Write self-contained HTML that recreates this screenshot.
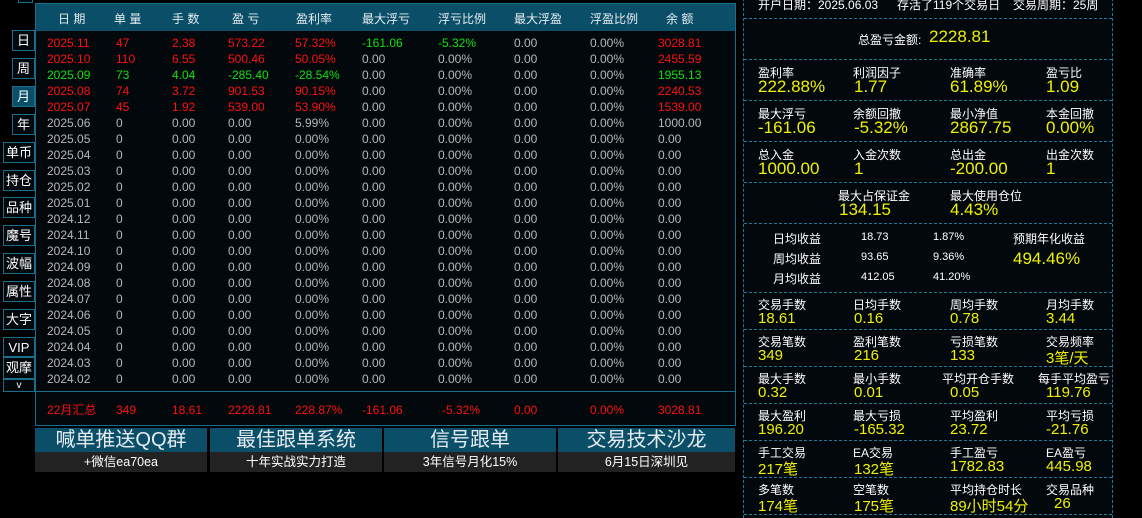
<!DOCTYPE html><html><head><meta charset="utf-8"><style>
*{margin:0;padding:0;box-sizing:border-box}
body{width:1142px;height:517px;background:#000;position:relative;overflow:hidden;font-family:"Liberation Sans","Noto Sans CJK SC",sans-serif;color:#fff}
.btn{position:absolute;border:1px solid #1a6e8c;background:#02080c;color:#fff;font-size:13px;text-align:center;line-height:19px}
#tbl{position:absolute;left:35px;top:3px;width:701px;height:423px;border:1px solid #1a6e8c;background:#02080c}
#hd{position:absolute;left:0;top:0;width:699px;height:27px;background:#0b4e68}
.h{position:absolute;top:6px;font-size:12px;color:#e6eef2;white-space:nowrap}
.r{position:absolute;left:0;height:16px;font-size:12px;line-height:16px;color:#b8b8b8;width:699px}
.r span{position:absolute;top:0;white-space:nowrap}
.R{color:#ff1010}.G{color:#10e010}
.c1{left:11px}.c2{left:80px}.c3{left:136px}.c4{left:192px}.c5{left:259px}.c6{left:326px}.c7{left:402px}.c8{left:478px}.c9{left:554px}.c10{left:622px}
.ban{position:absolute;top:428px;width:172px}
.ban .t{height:24px;background:#0b4e68;color:#e4ecf0;font-size:20px;line-height:24px;text-align:center;white-space:nowrap}
.ban .s{height:20px;background:#222;color:#fff;font-size:12.5px;line-height:20px;text-align:center;white-space:nowrap}
#rp{position:absolute;left:743px;top:-2px;width:370px;height:520px;border-left:1px dashed #1b7a9a;border-right:1px dashed #1b7a9a;background:#02080c}
.hl{position:absolute;left:744px;width:368px;border-top:1px dashed #1b7a9a}
.l{position:absolute;font-size:12px;color:#fff;white-space:nowrap}
.v{position:absolute;font-size:17px;color:#f0f000;white-space:nowrap}
.s11{font-size:11px}
</style></head><body>
<div class="btn" style="left:12px;top:30px;width:23px;height:21px">日</div>
<div class="btn" style="left:12px;top:58px;width:23px;height:21px">周</div>
<div class="btn" style="left:12px;top:86px;width:23px;height:21px;background:#0b4e68">月</div>
<div class="btn" style="left:12px;top:114px;width:23px;height:21px">年</div>
<div class="btn" style="left:3px;top:142px;width:32px;height:21px">单币</div>
<div class="btn" style="left:3px;top:170px;width:32px;height:21px">持仓</div>
<div class="btn" style="left:3px;top:197px;width:32px;height:21px">品种</div>
<div class="btn" style="left:3px;top:225px;width:32px;height:21px">魔号</div>
<div class="btn" style="left:3px;top:253px;width:32px;height:21px">波幅</div>
<div class="btn" style="left:3px;top:281px;width:32px;height:21px">属性</div>
<div class="btn" style="left:3px;top:309px;width:32px;height:21px">大字</div>
<div class="btn" style="left:3px;top:337px;width:32px;height:20px">VIP</div>
<div class="btn" style="left:3px;top:357px;width:32px;height:22px">观摩</div>
<div class="btn" style="left:3px;top:379px;width:32px;height:13px;font-size:10px;line-height:11px">v</div>
<div class="btn" style="left:18px;top:-5px;width:15px;height:8px"></div>

<div id="tbl">
<div id="hd">
<span class="h" style="left:22px">日 期</span><span class="h" style="left:78px">单 量</span><span class="h" style="left:136px">手 数</span><span class="h" style="left:196px">盈 亏</span><span class="h" style="left:260px">盈利率</span><span class="h" style="left:326px">最大浮亏</span><span class="h" style="left:402px">浮亏比例</span><span class="h" style="left:478px">最大浮盈</span><span class="h" style="left:554px">浮盈比例</span><span class="h" style="left:630px">余 额</span>
</div>
<div class="r R" style="top:31px"><span class="c1">2025.11</span><span class="c2">47</span><span class="c3">2.38</span><span class="c4">573.22</span><span class="c5">57.32%</span><span class="c6 G">-161.06</span><span class="c7 G">-5.32%</span><span class="c8" style="color:#b8b8b8">0.00</span><span class="c9" style="color:#b8b8b8">0.00%</span><span class="c10">3028.81</span></div>
<div class="r" style="top:47px"><span class="c1 R">2025.10</span><span class="c2 R">110</span><span class="c3 R">6.55</span><span class="c4 R">500.46</span><span class="c5 R">50.05%</span><span class="c6">0.00</span><span class="c7">0.00%</span><span class="c8">0.00</span><span class="c9">0.00%</span><span class="c10 R">2455.59</span></div>
<div class="r" style="top:63px"><span class="c1 G">2025.09</span><span class="c2 G">73</span><span class="c3 G">4.04</span><span class="c4 G">-285.40</span><span class="c5 G">-28.54%</span><span class="c6">0.00</span><span class="c7">0.00%</span><span class="c8">0.00</span><span class="c9">0.00%</span><span class="c10 G">1955.13</span></div>
<div class="r" style="top:79px"><span class="c1 R">2025.08</span><span class="c2 R">74</span><span class="c3 R">3.72</span><span class="c4 R">901.53</span><span class="c5 R">90.15%</span><span class="c6">0.00</span><span class="c7">0.00%</span><span class="c8">0.00</span><span class="c9">0.00%</span><span class="c10 R">2240.53</span></div>
<div class="r" style="top:95px"><span class="c1 R">2025.07</span><span class="c2 R">45</span><span class="c3 R">1.92</span><span class="c4 R">539.00</span><span class="c5 R">53.90%</span><span class="c6">0.00</span><span class="c7">0.00%</span><span class="c8">0.00</span><span class="c9">0.00%</span><span class="c10 R">1539.00</span></div>
<div class="r" style="top:111px"><span class="c1">2025.06</span><span class="c2">0</span><span class="c3">0.00</span><span class="c4">0.00</span><span class="c5">5.99%</span><span class="c6">0.00</span><span class="c7">0.00%</span><span class="c8">0.00</span><span class="c9">0.00%</span><span class="c10">1000.00</span></div>
<div class="r" style="top:127px"><span class="c1">2025.05</span><span class="c2">0</span><span class="c3">0.00</span><span class="c4">0.00</span><span class="c5">0.00%</span><span class="c6">0.00</span><span class="c7">0.00%</span><span class="c8">0.00</span><span class="c9">0.00%</span><span class="c10">0.00</span></div>
<div class="r" style="top:143px"><span class="c1">2025.04</span><span class="c2">0</span><span class="c3">0.00</span><span class="c4">0.00</span><span class="c5">0.00%</span><span class="c6">0.00</span><span class="c7">0.00%</span><span class="c8">0.00</span><span class="c9">0.00%</span><span class="c10">0.00</span></div>
<div class="r" style="top:159px"><span class="c1">2025.03</span><span class="c2">0</span><span class="c3">0.00</span><span class="c4">0.00</span><span class="c5">0.00%</span><span class="c6">0.00</span><span class="c7">0.00%</span><span class="c8">0.00</span><span class="c9">0.00%</span><span class="c10">0.00</span></div>
<div class="r" style="top:175px"><span class="c1">2025.02</span><span class="c2">0</span><span class="c3">0.00</span><span class="c4">0.00</span><span class="c5">0.00%</span><span class="c6">0.00</span><span class="c7">0.00%</span><span class="c8">0.00</span><span class="c9">0.00%</span><span class="c10">0.00</span></div>
<div class="r" style="top:191px"><span class="c1">2025.01</span><span class="c2">0</span><span class="c3">0.00</span><span class="c4">0.00</span><span class="c5">0.00%</span><span class="c6">0.00</span><span class="c7">0.00%</span><span class="c8">0.00</span><span class="c9">0.00%</span><span class="c10">0.00</span></div>
<div class="r" style="top:207px"><span class="c1">2024.12</span><span class="c2">0</span><span class="c3">0.00</span><span class="c4">0.00</span><span class="c5">0.00%</span><span class="c6">0.00</span><span class="c7">0.00%</span><span class="c8">0.00</span><span class="c9">0.00%</span><span class="c10">0.00</span></div>
<div class="r" style="top:223px"><span class="c1">2024.11</span><span class="c2">0</span><span class="c3">0.00</span><span class="c4">0.00</span><span class="c5">0.00%</span><span class="c6">0.00</span><span class="c7">0.00%</span><span class="c8">0.00</span><span class="c9">0.00%</span><span class="c10">0.00</span></div>
<div class="r" style="top:239px"><span class="c1">2024.10</span><span class="c2">0</span><span class="c3">0.00</span><span class="c4">0.00</span><span class="c5">0.00%</span><span class="c6">0.00</span><span class="c7">0.00%</span><span class="c8">0.00</span><span class="c9">0.00%</span><span class="c10">0.00</span></div>
<div class="r" style="top:255px"><span class="c1">2024.09</span><span class="c2">0</span><span class="c3">0.00</span><span class="c4">0.00</span><span class="c5">0.00%</span><span class="c6">0.00</span><span class="c7">0.00%</span><span class="c8">0.00</span><span class="c9">0.00%</span><span class="c10">0.00</span></div>
<div class="r" style="top:271px"><span class="c1">2024.08</span><span class="c2">0</span><span class="c3">0.00</span><span class="c4">0.00</span><span class="c5">0.00%</span><span class="c6">0.00</span><span class="c7">0.00%</span><span class="c8">0.00</span><span class="c9">0.00%</span><span class="c10">0.00</span></div>
<div class="r" style="top:287px"><span class="c1">2024.07</span><span class="c2">0</span><span class="c3">0.00</span><span class="c4">0.00</span><span class="c5">0.00%</span><span class="c6">0.00</span><span class="c7">0.00%</span><span class="c8">0.00</span><span class="c9">0.00%</span><span class="c10">0.00</span></div>
<div class="r" style="top:303px"><span class="c1">2024.06</span><span class="c2">0</span><span class="c3">0.00</span><span class="c4">0.00</span><span class="c5">0.00%</span><span class="c6">0.00</span><span class="c7">0.00%</span><span class="c8">0.00</span><span class="c9">0.00%</span><span class="c10">0.00</span></div>
<div class="r" style="top:319px"><span class="c1">2024.05</span><span class="c2">0</span><span class="c3">0.00</span><span class="c4">0.00</span><span class="c5">0.00%</span><span class="c6">0.00</span><span class="c7">0.00%</span><span class="c8">0.00</span><span class="c9">0.00%</span><span class="c10">0.00</span></div>
<div class="r" style="top:335px"><span class="c1">2024.04</span><span class="c2">0</span><span class="c3">0.00</span><span class="c4">0.00</span><span class="c5">0.00%</span><span class="c6">0.00</span><span class="c7">0.00%</span><span class="c8">0.00</span><span class="c9">0.00%</span><span class="c10">0.00</span></div>
<div class="r" style="top:351px"><span class="c1">2024.03</span><span class="c2">0</span><span class="c3">0.00</span><span class="c4">0.00</span><span class="c5">0.00%</span><span class="c6">0.00</span><span class="c7">0.00%</span><span class="c8">0.00</span><span class="c9">0.00%</span><span class="c10">0.00</span></div>
<div class="r" style="top:367px"><span class="c1">2024.02</span><span class="c2">0</span><span class="c3">0.00</span><span class="c4">0.00</span><span class="c5">0.00%</span><span class="c6">0.00</span><span class="c7">0.00%</span><span class="c8">0.00</span><span class="c9">0.00%</span><span class="c10">0.00</span></div>
<div style="position:absolute;left:0;top:387px;width:699px;border-top:1px solid #1a6e8c"></div>
<div class="r R" style="top:398px"><span class="c1">22月汇总</span><span style="left:80px">349</span><span class="c3">18.61</span><span class="c4">2228.81</span><span class="c5">228.87%</span><span class="c6">-161.06</span><span style="left:406px">-5.32%</span><span class="c8">0.00</span><span class="c9">0.00%</span><span class="c10">3028.81</span></div>
</div>

<div class="ban" style="left:35px"><div class="t">喊单推送QQ群</div><div class="s">+微信ea70ea</div></div>
<div class="ban" style="left:210px"><div class="t">最佳跟单系统</div><div class="s">十年实战实力打造</div></div>
<div class="ban" style="left:384px"><div class="t">信号跟单</div><div class="s">3年信号月化15%</div></div>
<div class="ban" style="left:558px;width:177px"><div class="t">交易技术沙龙</div><div class="s">6月15日深圳见</div></div>

<div id="rp"></div>
<div class="l" style="left:758px;top:-4px">开户日期：2025.06.03</div>
<div class="l" style="left:897px;top:-4px">存活了119个交易日</div>
<div class="l" style="left:1013px;top:-4px">交易周期：25周</div>
<div class="hl" style="top:18px"></div>
<div class="l" style="left:858px;top:31px">总盈亏金额:</div>
<div class="v" style="left:929px;top:27px">2228.81</div>
<div class="hl" style="top:59px"></div>
<div class="l" style="left:758px;top:64px">盈利率</div><div class="l" style="left:853px;top:64px">利润因子</div><div class="l" style="left:950px;top:64px">准确率</div><div class="l" style="left:1046px;top:64px">盈亏比</div>
<div class="v" style="left:758px;top:77px">222.88%</div><div class="v" style="left:854px;top:77px">1.77</div><div class="v" style="left:950px;top:77px">61.89%</div><div class="v" style="left:1046px;top:77px">1.09</div>
<div class="hl" style="top:100px"></div>
<div class="l" style="left:758px;top:105px">最大浮亏</div><div class="l" style="left:853px;top:105px">余额回撤</div><div class="l" style="left:950px;top:105px">最小净值</div><div class="l" style="left:1046px;top:105px">本金回撤</div>
<div class="v" style="left:758px;top:118px">-161.06</div><div class="v" style="left:854px;top:118px">-5.32%</div><div class="v" style="left:950px;top:118px">2867.75</div><div class="v" style="left:1046px;top:118px">0.00%</div>
<div class="hl" style="top:141px"></div>
<div class="l" style="left:758px;top:146px">总入金</div><div class="l" style="left:853px;top:146px">入金次数</div><div class="l" style="left:950px;top:146px">总出金</div><div class="l" style="left:1046px;top:146px">出金次数</div>
<div class="v" style="left:758px;top:159px">1000.00</div><div class="v" style="left:854px;top:159px">1</div><div class="v" style="left:950px;top:159px">-200.00</div><div class="v" style="left:1046px;top:159px">1</div>
<div class="hl" style="top:182px"></div>
<div class="l" style="left:838px;top:187px">最大占保证金</div><div class="l" style="left:950px;top:187px">最大使用仓位</div>
<div class="v" style="left:839px;top:200px">134.15</div><div class="v" style="left:950px;top:200px">4.43%</div>
<div class="hl" style="top:223px"></div>
<div class="l" style="left:773px;top:230px">日均收益</div><div class="l s11" style="left:861px;top:231px">18.73</div><div class="l s11" style="left:933px;top:231px">1.87%</div>
<div class="l" style="left:773px;top:250px">周均收益</div><div class="l s11" style="left:861px;top:251px">93.65</div><div class="l s11" style="left:933px;top:251px">9.36%</div>
<div class="l" style="left:773px;top:270px">月均收益</div><div class="l s11" style="left:861px;top:271px">412.05</div><div class="l s11" style="left:933px;top:271px">41.20%</div>
<div class="l" style="left:1013px;top:230px">预期年化收益</div><div class="v" style="left:1013px;top:249px">494.46%</div>
<div class="hl" style="top:292px"></div>
<div class="l" style="left:758px;top:296px">交易手数</div><div class="l" style="left:853px;top:296px">日均手数</div><div class="l" style="left:950px;top:296px">周均手数</div><div class="l" style="left:1046px;top:296px">月均手数</div>
<div class="v" style="left:758px;top:310px;font-size:15px">18.61</div><div class="v" style="left:854px;top:310px;font-size:15px">0.16</div><div class="v" style="left:950px;top:310px;font-size:15px">0.78</div><div class="v" style="left:1046px;top:310px;font-size:15px">3.44</div>
<div class="hl" style="top:329px"></div>
<div class="l" style="left:758px;top:333px">交易笔数</div><div class="l" style="left:853px;top:333px">盈利笔数</div><div class="l" style="left:950px;top:333px">亏损笔数</div><div class="l" style="left:1046px;top:333px">交易频率</div>
<div class="v" style="left:758px;top:347px;font-size:15px">349</div><div class="v" style="left:854px;top:347px;font-size:15px">216</div><div class="v" style="left:950px;top:347px;font-size:15px">133</div><div class="v" style="left:1046px;top:347px;font-size:15px">3笔/天</div>
<div class="hl" style="top:366px"></div>
<div class="l" style="left:758px;top:370px">最大手数</div><div class="l" style="left:853px;top:370px">最小手数</div><div class="l" style="left:942px;top:370px">平均开仓手数</div><div class="l" style="left:1038px;top:370px">每手平均盈亏</div>
<div class="v" style="left:758px;top:384px;font-size:15px">0.32</div><div class="v" style="left:854px;top:384px;font-size:15px">0.01</div><div class="v" style="left:950px;top:384px;font-size:15px">0.05</div><div class="v" style="left:1046px;top:384px;font-size:15px">119.76</div>
<div class="hl" style="top:403px"></div>
<div class="l" style="left:758px;top:407px">最大盈利</div><div class="l" style="left:853px;top:407px">最大亏损</div><div class="l" style="left:950px;top:407px">平均盈利</div><div class="l" style="left:1046px;top:407px">平均亏损</div>
<div class="v" style="left:758px;top:421px;font-size:15px">196.20</div><div class="v" style="left:854px;top:421px;font-size:15px">-165.32</div><div class="v" style="left:950px;top:421px;font-size:15px">23.72</div><div class="v" style="left:1046px;top:421px;font-size:15px">-21.76</div>
<div class="hl" style="top:440px"></div>
<div class="l" style="left:758px;top:444px">手工交易</div><div class="l" style="left:853px;top:444px">EA交易</div><div class="l" style="left:950px;top:444px">手工盈亏</div><div class="l" style="left:1046px;top:444px">EA盈亏</div>
<div class="v" style="left:758px;top:458px;font-size:15px">217笔</div><div class="v" style="left:854px;top:458px;font-size:15px">132笔</div><div class="v" style="left:950px;top:458px;font-size:15px">1782.83</div><div class="v" style="left:1046px;top:458px;font-size:15px">445.98</div>
<div class="hl" style="top:477px"></div>
<div class="l" style="left:758px;top:481px">多笔数</div><div class="l" style="left:853px;top:481px">空笔数</div><div class="l" style="left:950px;top:481px">平均持仓时长</div><div class="l" style="left:1046px;top:481px">交易品种</div>
<div class="v" style="left:758px;top:495px;font-size:15px">174笔</div><div class="v" style="left:854px;top:495px;font-size:15px">175笔</div><div class="v" style="left:950px;top:495px;font-size:15px">89小时54分</div><div class="v" style="left:1054px;top:495px;font-size:15px">26</div>
<div class="hl" style="top:514px"></div>
</body></html>
